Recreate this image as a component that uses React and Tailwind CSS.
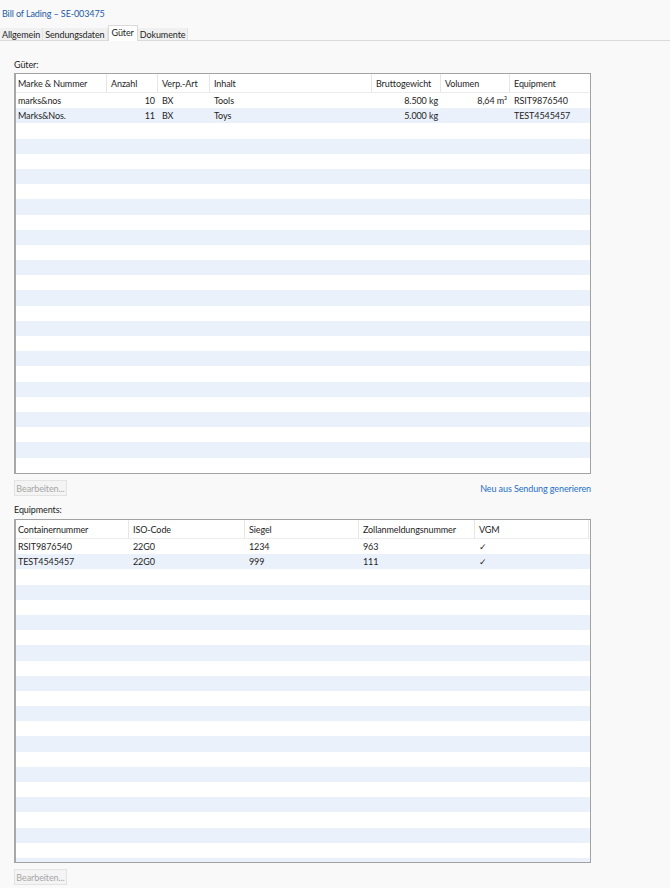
import React from "react";

const FONT = { fontFamily: 'Lato, "Noto Sans", Arial, sans-serif', letterSpacing: "-0.1px" };

function Table({ cols, data, height, rowCount }) {
  const rows = [];
  for (let i = 0; i < rowCount; i++) rows.push(data[i] || null);
  return (
    <div className="border border-[#a3a3a3] border-l-2 border-l-[#a8a8a8] bg-white overflow-hidden" style={{ height }}>
      <div className="flex h-[19px] border-b border-[#ececec]">
        {cols.map((c, i) => (
          <div
            key={i}
            className={`h-full flex items-center border-r border-[#e6e6e6] text-[#1e1e1e] shrink-0 whitespace-nowrap ${i === 0 ? "pl-[2px]" : "pl-[4px]"} ${c.grow ? "flex-1 border-r-0" : ""}`}
            style={c.grow ? {} : { width: i === 0 ? c.w - 1 : c.w }}
          >
            {c.label}
          </div>
        ))}
      </div>
      {rows.map((r, ri) => (
        <div key={ri} className={`flex h-[15.2px] items-center ${ri % 2 === 1 ? "bg-[#eaf1fb]" : "bg-white"}`}>
          {cols.map((c, ci) => (
            <div
              key={ci}
              className={`h-full flex items-center shrink-0 whitespace-nowrap text-[#1e1e1e] ${c.right ? "justify-end pr-[3px]" : ci === 0 ? "pl-[2px]" : "pl-[4px]"} ${c.grow ? "flex-1" : ""}`}
              style={c.grow ? {} : { width: ci === 0 ? c.w - 1 : c.w }}
            >
              {r ? r[ci] : ""}
            </div>
          ))}
        </div>
      ))}
    </div>
  );
}

function Btn() {
  return (
    <div className="h-[16px] w-[53px] border border-[#e3e3e3] bg-[#f4f4f4] flex items-center justify-center text-[#a6a6a6] whitespace-nowrap">
      Bearbeiten...
    </div>
  );
}

export default function App() {
  const cols1 = [
    { label: "Marke & Nummer", w: 92 },
    { label: "Anzahl", w: 51, right: true },
    { label: "Verp.-Art", w: 52 },
    { label: "Inhalt", w: 162 },
    { label: "Bruttogewicht", w: 69, right: true },
    { label: "Volumen", w: 69, right: true },
    { label: "Equipment", grow: true },
  ];
  const data1 = [
    ["marks&nos", "10", "BX", "Tools", "8.500 kg", "8,64 m³", "RSIT9876540"],
    ["Marks&Nos.", "11", "BX", "Toys", "5.000 kg", "", "TEST4545457"],
  ];
  const cols2 = [
    { label: "Containernummer", w: 114 },
    { label: "ISO-Code", w: 116 },
    { label: "Siegel", w: 114 },
    { label: "Zollanmeldungsnummer", w: 116 },
    { label: "VGM", w: 114 },
    { label: "", grow: true },
  ];
  const data2 = [
    ["RSIT9876540", "22G0", "1234", "963", "✓", ""],
    ["TEST4545457", "22G0", "999", "111", "✓", ""],
  ];
  return (
    <div className="w-[670px] h-[888px] bg-[#f9f9f9] text-[9px] leading-none overflow-hidden" style={FONT}>
      <div className="h-[26px] flex items-center pl-[2px] text-[#2559a8] whitespace-nowrap">Bill of Lading – SE-003475</div>
      <div className="flex items-end h-[15px] border-b border-[#dadada]">
        <div className="h-[12px] px-[2px] flex items-center border-r border-[#e3e3e3] bg-[#f0f0f0] text-[#1e1e1e] whitespace-nowrap">Allgemein</div>
        <div className="h-[12px] px-[2px] flex items-center border-r border-[#e3e3e3] bg-[#f0f0f0] text-[#1e1e1e] whitespace-nowrap">Sendungsdaten</div>
        <div className="h-[16px] px-[3px] flex items-center border border-b-0 border-[#dadada] bg-white text-[#1e1e1e] -mb-px pb-[3px] whitespace-nowrap">Güter</div>
        <div className="h-[12px] px-[2px] flex items-center border-r border-[#e3e3e3] bg-[#f0f0f0] text-[#1e1e1e] whitespace-nowrap">Dokumente</div>
      </div>
      <div className="pl-[14px] pr-[79px]">
        <div className="h-[32px] flex items-end pb-[4px] text-[#1e1e1e]">Güter:</div>
        <Table cols={cols1} data={data1} height={401} rowCount={26} />
        <div className="flex items-start justify-between mt-[6px] h-[16px]">
          <Btn />
          <div className="text-[#1f6fc8] pt-[4px] whitespace-nowrap">Neu aus Sendung generieren</div>
        </div>
        <div className="h-[23px] flex items-end pb-[5px] text-[#1e1e1e]">Equipments:</div>
        <Table cols={cols2} data={data2} height={344} rowCount={23} />
        <div className="mt-[6px]">
          <Btn />
        </div>
      </div>
    </div>
  );
}
